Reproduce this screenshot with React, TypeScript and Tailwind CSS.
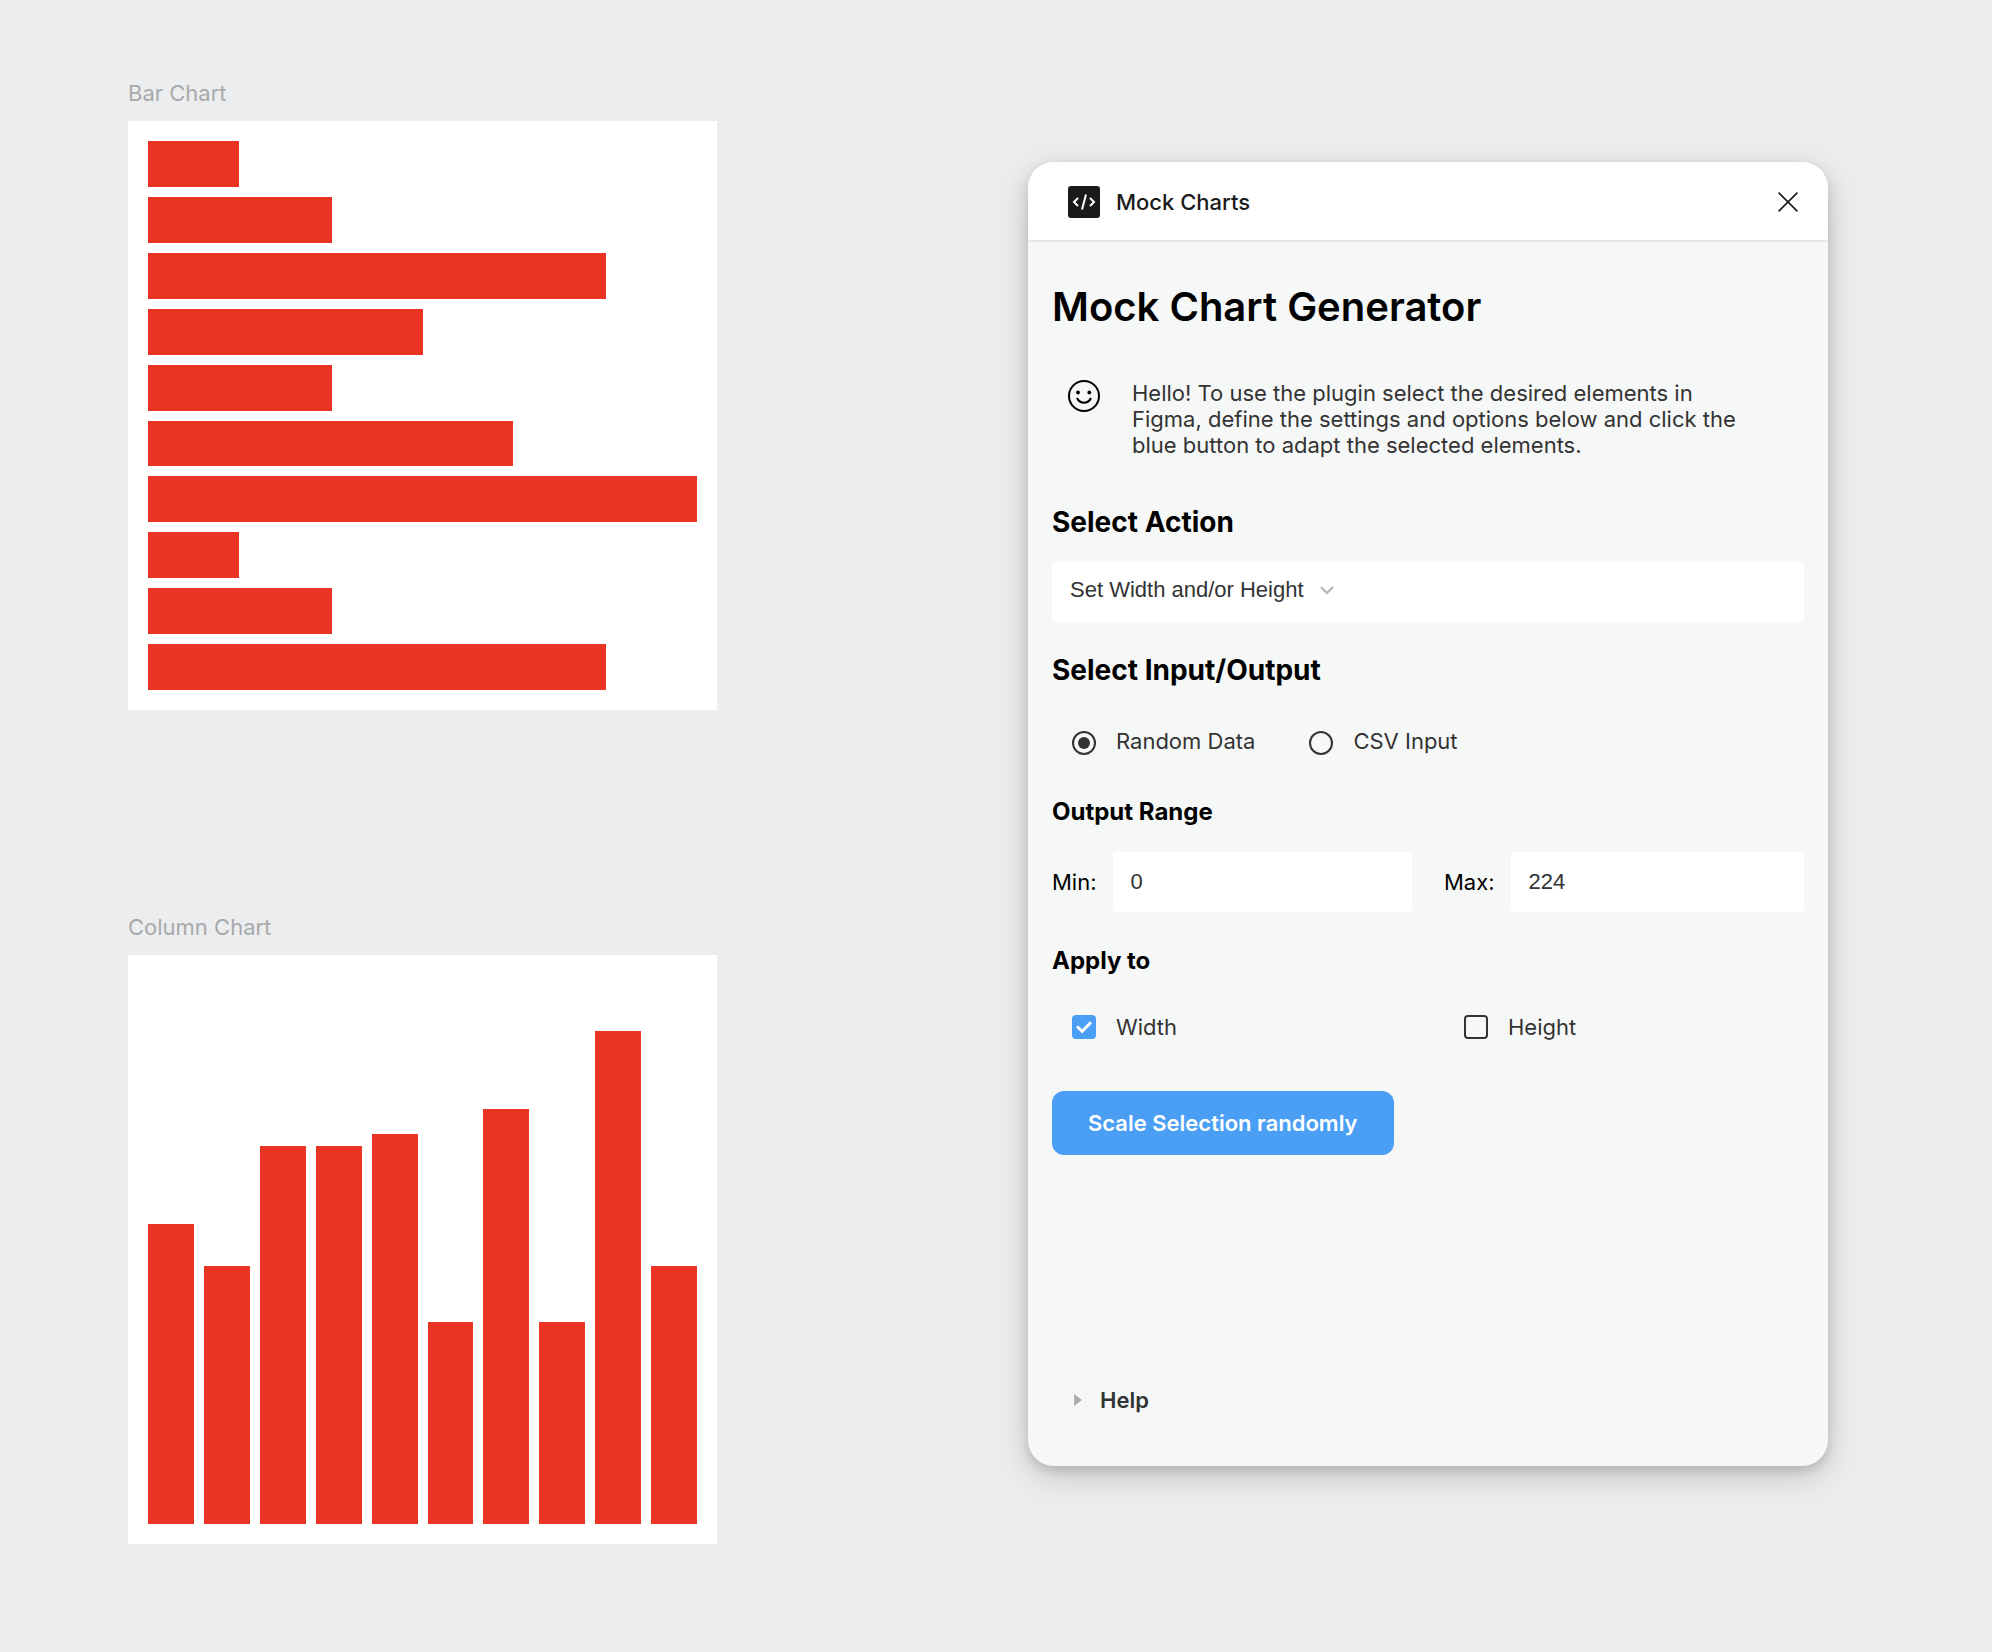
import React, { useState } from "react";

const BARS = [91, 184, 458, 275, 184, 365, 549, 91, 184, 458];
const COLUMNS = [300, 258, 378, 378, 390, 202, 415, 202, 493, 258];
const PLOT = 549;

const label = "text-[22px] leading-[26px] text-[#333333]";
const caption = "mb-[15px] text-[22px] leading-[26px] text-[#a8a9aa]";
const field =
  "h-[60px] w-full min-w-0 flex-1 rounded-sm bg-white px-[18px] font-['Liberation_Sans',sans-serif] text-[#333333]";

function BarChart() {
  return (
    <figure>
      <figcaption className={caption}>Bar Chart</figcaption>
      <div className="flex aspect-square w-full flex-col gap-[10px] bg-white p-5">
        {BARS.map((value, i) => (
          <div key={i} className="flex-1 bg-[#ea3323]" style={{ width: `${(value / PLOT) * 100}%` }} />
        ))}
      </div>
    </figure>
  );
}

function ColumnChart() {
  return (
    <figure>
      <figcaption className={caption}>Column Chart</figcaption>
      <div className="aspect-square w-full bg-white p-5">
        <div className="flex h-full items-end gap-[10px]">
          {COLUMNS.map((value, i) => (
            <div key={i} className="flex-1 bg-[#ea3323]" style={{ height: `${(value / PLOT) * 100}%` }} />
          ))}
        </div>
      </div>
    </figure>
  );
}

function CodeIcon() {
  return (
    <svg width="32" height="32" viewBox="0 0 32 32" fill="none" aria-hidden="true">
      <rect width="32" height="32" rx="3" fill="#1a1a1a" />
      <path d="M10 12L6 16L10 20M22 12L26 16L22 20M18 8.5L14 23.5" stroke="white" strokeWidth="2" />
    </svg>
  );
}

function SmileIcon() {
  return (
    <svg className="shrink-0" width="32" height="32" viewBox="0 0 32 32" fill="none" aria-hidden="true">
      <circle cx="16" cy="16" r="15" stroke="black" strokeWidth="2" />
      <circle cx="10" cy="12.5" r="1.9" fill="black" />
      <circle cx="21.3" cy="12.5" r="1.9" fill="black" />
      <path d="M9 18C10.5 21.3 13 22.7 16 22.7C19 22.7 21.5 21.3 23 18" stroke="black" strokeWidth="2" />
    </svg>
  );
}

function Radio({ text, checked, onSelect }: { text: string; checked: boolean; onSelect: () => void }) {
  return (
    <label className={`flex items-center gap-5 ${label}`}>
      <input
        type="radio"
        name="source"
        checked={checked}
        onChange={onSelect}
        className="mt-1 size-6 appearance-none rounded-full border-2 border-[#333333] bg-clip-content p-1 checked:bg-[#333333]"
      />
      {text}
    </label>
  );
}

function Check({ text, checked, onToggle }: { text: string; checked: boolean; onToggle: () => void }) {
  return (
    <label className={`flex flex-1 items-center gap-5 pl-5 ${label}`}>
      <span className="grid">
        <input
          type="checkbox"
          checked={checked}
          onChange={onToggle}
          className="col-start-1 row-start-1 size-6 appearance-none rounded-sm border-2 border-[#333333] checked:border-[#4a9ff5] checked:bg-[#4a9ff5]"
        />
        {checked && (
          <svg
            className="pointer-events-none col-start-1 row-start-1"
            width="24"
            height="24"
            viewBox="0 0 24 24"
            fill="none"
            aria-hidden="true"
          >
            <path d="M5 11.5L10.2 16.3L19 7.3" stroke="white" strokeWidth="3" />
          </svg>
        )}
      </span>
      {text}
    </label>
  );
}

export default function App() {
  const [source, setSource] = useState("random");
  const [width, setWidth] = useState(true);
  const [height, setHeight] = useState(false);
  const [min, setMin] = useState("0");
  const [max, setMax] = useState("224");

  return (
    <div className="flex min-h-screen items-start justify-between gap-16 bg-[#ecedef] pt-20 pr-41 pb-27 pl-32 font-['Inter',sans-serif]">
      <main className="flex w-[589px] flex-col gap-51">
        <BarChart />
        <ColumnChart />
      </main>

      <section className="mt-[82px] flex min-h-[1304px] w-[800px] flex-col overflow-hidden rounded-[26px] bg-[#f6f8f7] shadow-[0_10px_34px_rgba(0,0,0,0.17),0_5px_12px_rgba(0,0,0,0.14)]">
        <header className="flex h-20 items-center gap-4 bg-white pr-6 pl-10 shadow-[inset_0_-2px_0_#e5e6e6]">
          <CodeIcon />
          <span className="flex-1 text-[22px] leading-[26px] font-medium text-[#1a1a1a]">Mock Charts</span>
          <button type="button" aria-label="Close" className="grid size-8 place-items-center">
            <svg width="20" height="20" viewBox="0 0 20 20" fill="none" aria-hidden="true">
              <path d="M0.6 0.6L19.4 19.4M19.4 0.6L0.6 19.4" stroke="#1a1a1a" strokeWidth="1.6" />
            </svg>
          </button>
        </header>

        <div className="flex flex-1 flex-col px-6 pt-[42px] pb-[53px]">
          <h1 className="text-[40px] leading-[46px] font-semibold text-black">Mock Chart Generator</h1>

          <div className="mt-[50px] flex gap-8 pl-4">
            <SmileIcon />
            <p className={`w-[620px] ${label}`}>
              Hello! To use the plugin select the desired elements in Figma, define the settings and options below and
              click the blue button to adapt the selected elements.
            </p>
          </div>

          <h2 className="mt-[46px] text-[28px] leading-[36px] font-bold text-black">
            <label htmlFor="action">Select Action</label>
          </h2>
          <div className="mt-[22px] flex h-[60px] items-center gap-4 rounded-sm bg-white px-[18px] pb-1">
            <select
              id="action"
              className={`appearance-none bg-transparent font-['Liberation_Sans',sans-serif] ${label}`}
            >
              <option>Set Width and/or Height</option>
            </select>
            <svg width="14" height="9" viewBox="0 0 14 9" fill="none" aria-hidden="true">
              <path d="M1 1L7 7L13 1" stroke="#b3b3b3" strokeWidth="2" />
            </svg>
          </div>

          <h2 className="mt-[30px] text-[28px] leading-[36px] font-bold text-black">Select Input/Output</h2>
          <div className="mt-[39px] flex gap-[54px] pl-5" role="radiogroup" aria-label="Select Input/Output">
            <Radio text="Random Data" checked={source === "random"} onSelect={() => setSource("random")} />
            <Radio text="CSV Input" checked={source === "csv"} onSelect={() => setSource("csv")} />
          </div>

          <h3 className="mt-[41px] text-[24px] leading-[32px] font-bold text-black">Output Range</h3>
          <div className="mt-6 flex gap-8">
            <label className="flex flex-1 items-center gap-4 text-[22px] leading-[26px] text-black">
              Min:
              <input className={field} value={min} onChange={(e) => setMin(e.target.value)} />
            </label>
            <label className="flex flex-1 items-center gap-4 text-[22px] leading-[26px] text-black">
              Max:
              <input className={field} value={max} onChange={(e) => setMax(e.target.value)} />
            </label>
          </div>

          <h3 className="mt-[33px] text-[24px] leading-[32px] font-bold text-black">Apply to</h3>
          <div className="mt-[37px] flex gap-8">
            <Check text="Width" checked={width} onToggle={() => setWidth(!width)} />
            <Check text="Height" checked={height} onToggle={() => setHeight(!height)} />
          </div>

          <button
            type="button"
            className="mt-[51px] h-16 self-start rounded-xl bg-[#4a9ff5] px-9 text-[22px] leading-[26px] font-semibold text-white"
          >
            Scale Selection randomly
          </button>

          <button
            type="button"
            className="mt-auto flex items-center gap-[18px] self-start pl-[22px] text-[22px] leading-[26px] font-semibold text-[#333333]"
          >
            <svg width="8" height="12" viewBox="0 0 8 12" aria-hidden="true">
              <path d="M0 0L8 6L0 12Z" fill="#adaeae" />
            </svg>
            Help
          </button>
        </div>
      </section>
    </div>
  );
}
